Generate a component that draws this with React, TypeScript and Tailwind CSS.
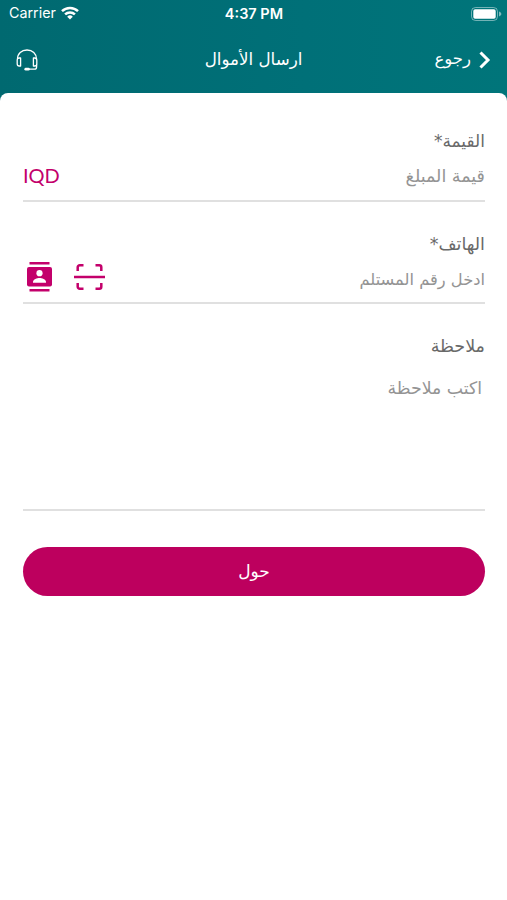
import React from "react"

function WifiIcon() {
  return (
    <svg className="h-[14px] w-[18px]" viewBox="0 0 18 14" fill="none" stroke="white" strokeWidth="2.5">
      <path d="M1 5.2a11.4 11.4 0 0 1 16 0" />
      <path d="M4.1 8.4a7 7 0 0 1 9.8 0" />
      <path d="M9 13.6 6.2 10.7a4 4 0 0 1 5.6 0Z" fill="white" stroke="none" />
    </svg>
  )
}

function BatteryIcon() {
  return (
    <svg className="h-[14px] w-[31px]" viewBox="0 0 31 14">
      <rect x="0.5" y="0.5" width="26" height="13" rx="4" fill="none" stroke="white" strokeOpacity="0.45" />
      <rect x="2.3" y="2.3" width="22.4" height="9.4" rx="1.8" fill="white" />
      <path d="M28 4.6v4.8c1.8-.7 2.3-1.5 2.3-2.4s-.5-1.7-2.3-2.4Z" fill="white" fillOpacity="0.5" />
    </svg>
  )
}

function HeadsetIcon() {
  return (
    <svg className="h-[22px] w-[22px]" viewBox="0 0 22 22" fill="none" stroke="white" strokeWidth="1.3" strokeLinecap="round" strokeLinejoin="round">
      <path d="M1.500 10C1.500 4.500 5.500 1 11 1s9.500 3.500 9.500 9" />
      <path d="M4.600 9H3.200C1.900 9 1.200 9.900 1.200 11.200v3.600c0 1.300.7 2.200 2 2.200h1.400Z" />
      <path d="M17.400 9h1.400c1.300 0 2 .9 2 2.200v3.600c0 1.300-.7 2.200-2 2.200h-1.400Z" />
      <path d="M20.600 16v2c0 1.500-.8 2.200-2.200 2.200H12" />
      <path d="M9.800 20.200h2.600" strokeWidth="2.800" />
    </svg>
  )
}

function ContactsIcon() {
  return (
    <svg className="h-[30px] w-[25px]" viewBox="0 0 25 30" fill="#c3006b">
      <rect x="2.500" width="20" height="2.500" />
      <rect x="2.500" y="27" width="20" height="2.500" />
      <rect y="5" width="25" height="19.500" rx="2" />
      <circle cx="12.500" cy="11.200" r="3.100" fill="white" />
      <path d="M6 20.800v-1.100c0-2.400 4.200-3.800 6.500-3.800s6.500 1.400 6.500 3.800v1.100Z" fill="white" />
    </svg>
  )
}

function ScanIcon() {
  return (
    <svg className="h-[26px] w-[31px]" viewBox="0 0 31 26" fill="none" stroke="#c3006b" strokeWidth="2.500">
      <path d="M3.700 7V3.300A2 2 0 0 1 5.700 1.300H9.500" />
      <path d="M21.500 1.300H25.300a2 2 0 0 1 2 2V7" />
      <path d="M3.700 19v3.700a2 2 0 0 0 2 2H9.500" />
      <path d="M21.500 24.700H25.300a2 2 0 0 0 2-2V19" />
      <path d="M0 13h31" />
    </svg>
  )
}

export default function App() {
  return (
    <div
      className="flex h-[900px] w-full flex-col bg-[linear-gradient(90deg,#006970,#007078_60%,#00757a)] font-['DejaVu_Sans',sans-serif]"
      dir="rtl"
    >
      {/* Status bar */}
      <div className="grid h-7 grid-cols-3 items-center pl-[6px] pr-[5px] font-['Inter',sans-serif] text-white" dir="ltr">
        <div className="flex items-center gap-[5px] pb-[2px] pl-[3px] text-[14.3px]">
          <span>Carrier</span>
          <WifiIcon />
        </div>
        <span className="text-center text-[14.500px] font-semibold">4:37 PM</span>
        <div className="flex justify-end pb-px">
          <BatteryIcon />
        </div>
      </div>

      {/* Header */}
      <header className="grid h-[65px] grid-cols-3 items-center px-4 pb-[2px] text-white">
        <button className="flex items-center gap-2 text-[16.500px]">
          <svg className="h-[18px] w-3" viewBox="0 0 12 18" fill="none" stroke="white" strokeWidth="3">
            <path d="m1.500 1.500 7.500 7.500-7.500 7.500" />
          </svg>
          <span>رجوع</span>
        </button>
        <h1 className="whitespace-nowrap text-center text-[16.700px]">ارسال الأموال</h1>
        <div className="flex justify-end">
          <HeadsetIcon />
        </div>
      </header>

      {/* Transfer form */}
      <main className="flex-1 rounded-t-[8px] bg-white pl-[23px] pr-[22px] pt-[36px]">
        <section className="h-[103px]">
          <label className="block h-6 text-[17px] leading-6 text-[#696969]">القيمة*</label>
          <div className="flex h-[49px] items-center justify-between border-b-2 border-[#e0e0e0] text-[#949494]">
            <span className="text-[17.500px]">قيمة المبلغ</span>
            <span className="pb-[3px] font-['Lato',sans-serif] text-[20px] text-[#c3006b]">IQD</span>
          </div>
        </section>

        <section className="h-[102px]">
          <label className="block h-6 text-[17.500px] leading-6 text-[#696969]">الهاتف*</label>
          <div className="flex h-[48px] items-center justify-between border-b-2 border-[#e0e0e0] text-[#949494]">
            <span className="pt-[2px] text-[16.300px]">ادخل رقم المستلم</span>
            <div className="flex items-center gap-[22px] pb-1 pl-[3.500px]">
              <ScanIcon />
              <ContactsIcon />
            </div>
          </div>
        </section>

        <section className="h-[213px]">
          <label className="block h-6 text-[17.500px] leading-6 text-[#696969]">ملاحظة</label>
          <div className="h-[153px] border-b-2 border-[#e0e0e0] pr-[3px] pt-[18px] text-[17.300px] leading-6 text-[#949494]">
            اكتب ملاحظة
          </div>
        </section>

        <button className="flex h-[49px] w-full items-center justify-center rounded-full bg-[#bd005e] text-[17px] text-white">
          حول
        </button>
      </main>
    </div>
  )
}
